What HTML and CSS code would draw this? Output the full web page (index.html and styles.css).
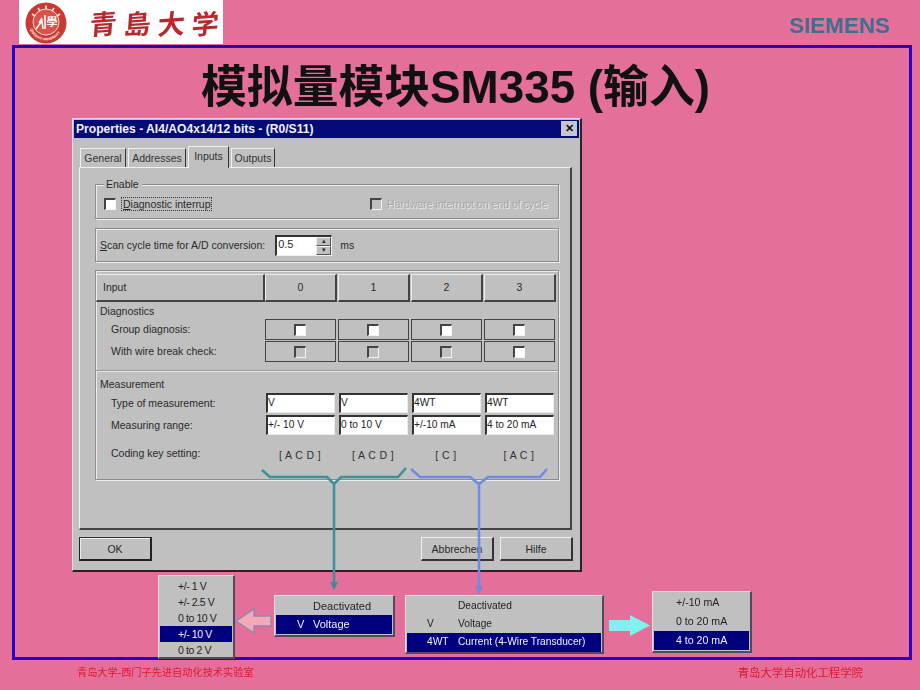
FILE: index.html
```html
<!DOCTYPE html>
<html lang="zh">
<head>
<meta charset="utf-8">
<title>模拟量模块SM335 (输入)</title>
<link rel="stylesheet" href="styles.css">
</head>
<body>
<div class="slide">
  <header class="top">
    <div class="logo">
      <svg class="seal" width="42" height="42" viewBox="0 0 42 42">
        <defs><path id="sealArc" d="M5 27 A17 17 0 0 0 37 27"/></defs>
        <circle cx="21" cy="21" r="20.5" fill="#c93a33"/>
        <circle cx="21" cy="20" r="13" fill="#d9534a" stroke="#f6d9d2" stroke-width="1"/>
        <path d="M7 12l3 2M13 6l2 3M21 3.500v3.500M29 6l-2 3M35 12l-3 2" stroke="#fbe6de" stroke-width="1.600"/>
        <path d="M11 27l6-8 1 8M17 16l-3 5M20 13v14" stroke="#fff" stroke-width="1.500" fill="none"/>
        <text x="27" y="24" class="seal-mark">學</text>
        <text class="seal-rim"><textPath href="#sealArc">QINGDAO UNIVERSITY</textPath></text>
      </svg>
      <div class="brush"><span>青</span><span>島</span><span>大</span><span>学</span></div>
    </div>
    <div class="brand">SIEMENS</div>
  </header>

  <main class="frame">
    <h1 class="title">模拟量模块SM335 (输入)</h1>
  </main>

  <footer class="foot">
    <span class="foot-l">青岛大学-西门子先进自动化技术实验室</span>
    <span class="foot-r">青岛大学自动化工程学院</span>
  </footer>

  <section class="dialog">
    <div class="titlebar">
      <span>Properties - AI4/AO4x14/12 bits - (R0/S11)</span>
      <span class="close">✕</span>
    </div>
    <div class="tabs">
      <span class="tab t-general">General</span>
      <span class="tab t-addr">Addresses</span>
      <span class="tab active">Inputs</span>
      <span class="tab t-out">Outputs</span>
    </div>
    <div class="panel">
      <div class="group g-enable">
        <span class="legend">Enable</span>
        <div class="enable-row">
          <span class="box white"></span>
          <span class="focus"><u>D</u>iagnostic interrupt</span>
          <span class="box off right-box"></span>
          <span class="disabled">Hardware interrupt on end of cycle</span>
        </div>
      </div>
      <div class="group g-scan">
        <span><u>S</u>can cycle time for A/D conversion:</span>
        <span class="spin"><span class="spin-val">0.5</span><span class="spin-btns"><i>▴</i><i>▾</i></span></span>
        <span>ms</span>
      </div>
      <div class="group g-table">
        <div class="grid head">
          <span class="hcell first">Input</span>
          <span class="hcell">0</span><span class="hcell">1</span><span class="hcell">2</span><span class="hcell">3</span>
        </div>
        <div class="sect-title s-diag">Diagnostics</div>
        <div class="grid chk">
          <span class="lbl">Group diagnosis:</span>
          <span class="ccell"><span class="box white"></span></span>
          <span class="ccell"><span class="box white"></span></span>
          <span class="ccell"><span class="box white"></span></span>
          <span class="ccell"><span class="box white"></span></span>
        </div>
        <div class="grid chk">
          <span class="lbl">With wire break check:</span>
          <span class="ccell"><span class="box off"></span></span>
          <span class="ccell"><span class="box off"></span></span>
          <span class="ccell"><span class="box off"></span></span>
          <span class="ccell"><span class="box white"></span></span>
        </div>
        <div class="sep"></div>
        <div class="sect-title s-meas">Measurement</div>
        <div class="grid inp">
          <span class="lbl">Type of measurement:</span>
          <span class="field">V</span><span class="field">V</span><span class="field">4WT</span><span class="field">4WT</span>
        </div>
        <div class="grid inp">
          <span class="lbl">Measuring range:</span>
          <span class="field">+/- 10 V</span><span class="field">0 to 10 V</span><span class="field">+/-10 mA</span><span class="field">4 to 20 mA</span>
        </div>
        <div class="grid code">
          <span class="lbl">Coding key setting:</span>
          <span class="key">[ A C D ]</span><span class="key">[ A C D ]</span><span class="key">[ C ]</span><span class="key">[ A C ]</span>
        </div>
      </div>
    </div>
    <div class="buttons">
      <span class="btn default">OK</span>
      <span class="btn cancel">Abbrechen</span>
      <span class="btn">Hilfe</span>
    </div>
  </section>

  <div class="pop p-range">
    <div class="row">+/- 1 V</div>
    <div class="row">+/- 2.5 V</div>
    <div class="row">0 to 10 V</div>
    <div class="row sel">+/- 10 V</div>
    <div class="row">0 to 2 V</div>
  </div>
  <div class="pop p-type">
    <div class="row"><span class="k"></span>Deactivated</div>
    <div class="row sel"><span class="k">V</span>Voltage</div>
  </div>
  <div class="pop p-type2">
    <div class="row"><span class="k"></span>Deactivated</div>
    <div class="row"><span class="k">V</span>Voltage</div>
    <div class="row sel"><span class="k">4WT</span>Current (4-Wire Transducer)</div>
  </div>
  <div class="pop p-ma">
    <div class="row">+/-10 mA</div>
    <div class="row">0 to 20 mA</div>
    <div class="row sel">4 to 20 mA</div>
  </div>

  <svg class="overlay" width="920" height="690" viewBox="0 0 920 690">
    <path d="M262 470l8 7h57l7 7 7-7h57l8-9" class="teal"/>
    <path d="M334 484V583" class="teal"/>
    <path d="M330 582h8l-4 8z" fill="#3f8a97"/>
    <path d="M411 469l9 8h50l9 7 9-7h52l7-8" class="blue"/>
    <path d="M479 484V587" class="blue"/>
    <path d="M475 586h8l-4 8z" fill="#6f86e2"/>
    <path d="M271 616v10h-17v7l-18-12 18-12v7z" fill="#f4a9b9" stroke="#8f8aa8" stroke-width="1.500"/>
    <path d="M609 620h21v-5l20 10.500-20 10.500v-5h-21z" fill="#80f1ee"/>
  </svg>
</div>
</body>
</html>
```

FILE: styles.css
```css
* { box-sizing: border-box; }
html, body { margin: 0; padding: 0; }
body {
  width: 920px;
  height: 690px;
  overflow: hidden;
  background: #e36f9a;
  font-family: "Liberation Sans", "Noto Sans CJK SC", sans-serif;
}
.slide { position: relative; width: 920px; height: 690px; filter: blur(0.35px); }

/* header */
.top {
  height: 45px;
  display: flex;
  justify-content: space-between;
  padding: 0 30px 0 19px;
}
.logo {
  width: 204px;
  height: 44px;
  background: #fff;
  display: flex;
  align-items: center;
  padding: 1px 0 0 6px;
}
.seal-mark { font: 700 11px "Noto Sans CJK TC", sans-serif; fill: #fff; text-anchor: middle; }
.seal-rim { font: 700 3.400px "Liberation Sans", sans-serif; fill: #fff; }
.brush {
  display: flex;
  gap: 7px;
  margin-left: 23px;
  font: 700 27px/1 "Noto Sans CJK JP", sans-serif;
  color: #b9282d;
}
.brush span { display: block; transform: skewX(-8deg) rotate(-4deg); }
.brand {
  padding-top: 13px;
  font-size: 22.400px;
  font-weight: 700;
  line-height: 25px;
  color: #3f6f8d;
}

/* slide frame */
.frame {
  margin-left: 12px;
  width: 900px;
  height: 615px;
  border: 3px solid #2c00c4;
}
.title {
  margin: 0;
  padding: 9px 13px 0 0;
  text-align: center;
  font-size: 45.800px;
  line-height: 62px;
  font-weight: 700;
  color: #111;
}
.foot {
  display: flex;
  justify-content: space-between;
  align-items: center;
  padding: 6px 57px 0 77px;
  line-height: 14px;
  color: #e0182e;
}
.foot-l { font-size: 10.200px; }
.foot-r { font-size: 11.400px; }

/* dialog window */
.dialog {
  position: absolute;
  left: 72px;
  top: 118px;
  width: 510px;
  height: 454px;
  background: #c0c0c0;
  border: 1px solid #f4d9e4;
  border-right: 2px solid #2a2228;
  border-bottom: 2px solid #2a2228;
  color: #2a2a2a;
  font-size: 10.500px;
  padding: 1px;
  display: flex;
  flex-direction: column;
}
.titlebar {
  height: 18px;
  background: #020a78;
  color: #f2f2ff;
  font-weight: 700;
  font-size: 12.100px;
  line-height: 18px;
  padding: 0 2px 0 2px;
  display: flex;
  justify-content: space-between;
}
.close {
  width: 16px;
  height: 15px;
  margin-top: 1px;
  background: #c6c6d2;
  color: #111;
  font-size: 11px;
  line-height: 15px;
  text-align: center;
}
.tabs {
  height: 29px;
  display: flex;
  align-items: flex-end;
  padding-left: 6px;
  gap: 2px;
  font-size: 10.500px;
}
.tab {
  height: 19px;
  line-height: 18px;
  text-align: center;
  border-top: 1px solid #f0f0f0;
  border-left: 1px solid #f0f0f0;
  border-right: 1px solid #333;
  color: #333;
}
.t-general { width: 46px; }
.t-addr { width: 58px; }
.t-out { width: 44px; }
.tab.active {
  width: 41px;
  height: 22px;
  line-height: 19px;
  margin-bottom: -1px;
  background: #c0c0c0;
  position: relative;
}
.panel {
  margin-left: 5px;
  width: 493px;
  height: 363px;
  border: 1px solid #f0f0f0;
  border-right: 2px solid #444;
  border-bottom: 2px solid #444;
  padding: 16px 0 0 15px;
  display: flex;
  flex-direction: column;
  gap: 9px;
}
.group {
  width: 464px;
  border: 1px solid #8c8c8c;
  box-shadow: inset 1px 1px 0 #ececec, 1px 1px 0 #ececec;
}
.g-enable { height: 35px; padding: 0 0 0 8px; }
.legend {
  display: block;
  width: 38px;
  height: 12px;
  margin-top: -7px;
  line-height: 12px;
  padding-left: 2px;
  background: #c0c0c0;
}
.enable-row {
  display: flex;
  align-items: center;
  margin-top: 7px;
  height: 14px;
}
.focus {
  flex: none;
  margin-left: 5px;
  padding: 0 1px;
  width: 91px;
  border: 1px dotted #333;
  line-height: 12px;
  white-space: nowrap;
  overflow: hidden;
}
.box {
  display: block;
  flex: none;
  width: 12px;
  height: 12px;
  border-top: 2px solid #444;
  border-left: 2px solid #444;
  border-right: 1px solid #f4f4f4;
  border-bottom: 1px solid #f4f4f4;
}
.box.white { background: #fff; }
.box.off { background: #c0c0c0; }
.right-box { margin-left: 158px; }
.disabled {
  margin-left: 5px;
  white-space: nowrap;
  color: #a6a6a6;
  text-shadow: 1px 1px 0 #ededed;
}
.g-scan {
  height: 34px;
  margin-bottom: -1px;
  display: flex;
  align-items: center;
  padding-left: 4px;
}
.spin {
  display: flex;
  width: 57px;
  height: 21px;
  margin: 0 8px 0 10px;
  background: #fff;
  border-top: 2px solid #333;
  border-left: 2px solid #333;
  border-right: 1px solid #f0f0f0;
  border-bottom: 1px solid #f0f0f0;
}
.spin-val { flex: 1; line-height: 15px; padding-left: 1px; font-size: 11px; }
.spin-btns {
  width: 15px;
  display: flex;
  flex-direction: column;
}
.spin-btns i {
  flex: 1;
  background: #c0c0c0;
  border: 1px solid;
  border-color: #f0f0f0 #555 #555 #f0f0f0;
  font-style: normal;
  font-size: 7px;
  line-height: 6px;
  text-align: center;
}
.g-table { height: 210px; padding: 3px 0 0 0; }
.grid {
  display: grid;
  grid-template-columns: 169px repeat(4, 73px);
}
.head { height: 26px; }
.hcell {
  margin-right: 1px;
  text-align: center;
  line-height: 25px;
  border-top: 1px solid #ececec;
  border-left: 1px solid #ececec;
  border-right: 2px solid #444;
  border-bottom: 2px solid #444;
}
.hcell.first { text-align: left; padding-left: 6px; margin-right: 0; }
.sect-title { padding-left: 4px; line-height: 14px; }
.s-diag { margin-top: 4px; height: 15px; }
.chk { height: 22px; }
.lbl { padding-left: 15px; line-height: 20px; }
.ccell {
  margin: 0 2px 1px 0;
  border: 1px solid #444;
  display: flex;
  align-items: center;
  justify-content: center;
}
.ccell .box { margin-right: 2px; }
.sep {
  height: 2px;
  margin: 7px 0 5px 0;
  background: #e8e8e8;
  border-top: 1px solid #9a9a9a;
}
.s-meas { height: 14px; }
.inp { height: 22px; }
.s-meas + .inp { margin-top: 2px; }
.field {
  margin: 0 3px 2px 1px;
  height: 20px;
  background: #fff;
  border-top: 2px solid #333;
  border-left: 2px solid #333;
  border-right: 1px solid #ececec;
  border-bottom: 1px solid #ececec;
  line-height: 16px;
  font-size: 10.200px;
  color: #222;
  white-space: nowrap;
  overflow: hidden;
}
.code { margin-top: 6px; }
.key { text-align: center; padding-top: 6px; margin-right: 3px; letter-spacing: 0.4px; color: #333; }

.buttons {
  display: flex;
  height: 24px;
  margin-top: 7px;
  padding: 0 0 0 5px;
}
.btn {
  width: 73px;
  height: 24px;
  text-align: center;
  line-height: 22px;
  border-top: 1px solid #f0f0f0;
  border-left: 1px solid #f0f0f0;
  border-right: 2px solid #333;
  border-bottom: 2px solid #333;
}
.btn.default { border-color: #222; border-top-color: #333; box-shadow: inset 1px 1px 0 #eee; }
.btn.cancel { margin-left: 269px; margin-right: 6px; }

/* popups */
.pop {
  position: absolute;
  background: #c0c0c0;
  border: 1px solid #f6dbe6;
  border-right: 2px solid #514a5a;
  border-bottom: 2px solid #514a5a;
  padding: 1px;
  font-size: 11px;
  color: #222;
}
.row { display: flex; white-space: nowrap; }
.sel { background: #00007f; color: #f2f2ff; }
.p-range { left: 158px; top: 575px; width: 77px; height: 84px; padding-top: 2px; font-size: 10.500px; letter-spacing: -0.4px; }
.p-range .row { height: 16px; line-height: 16px; padding-left: 18px; }
.p-type { left: 274px; top: 595px; width: 121px; height: 42px; }
.p-type .row { height: 18px; line-height: 18px; }
.p-type .k { width: 37px; padding-left: 21px; flex: none; }
.p-type .row.sel { height: 19px; }
.p-type2 { left: 405px; top: 595px; width: 199px; height: 59px; font-size: 10.200px; }
.p-type2 .row { height: 18px; line-height: 18px; }
.p-type2 .sel { height: 19px; }
.p-type2 .k { width: 51px; padding-left: 20px; flex: none; }
.p-ma { left: 652px; top: 591px; width: 100px; height: 62px; font-size: 10.600px; }
.p-ma .row { height: 19px; line-height: 19px; padding-left: 22px; }

.overlay { position: absolute; left: 0; top: 0; pointer-events: none; }
.teal { fill: none; stroke: #3f8f9c; stroke-width: 2.600; }
.blue { fill: none; stroke: #6f8be6; stroke-width: 2.600; }
```
